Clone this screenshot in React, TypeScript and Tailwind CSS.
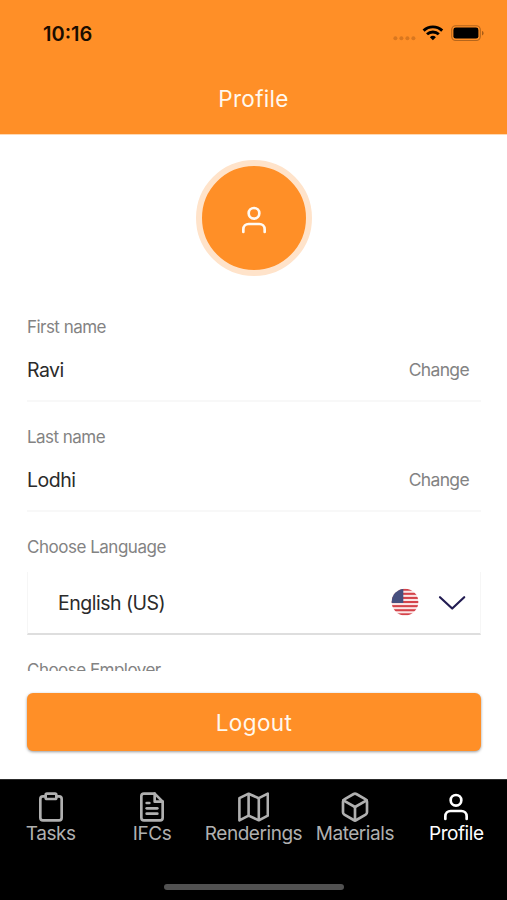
import React, { useState } from 'react';
import { FiBox, FiClipboard, FiFileText, FiUser } from 'react-icons/fi';

interface NameFieldProps {
  label: string;
  value: string;
}

function MapIcon({ size }: { size: number }) {
  return (
    <svg width={size} height={size} viewBox="0 0 32 32" fill="none" stroke="currentColor" strokeWidth="2.6" strokeLinejoin="round">
      <path d="M2.4 7.2l9.2-4.5 10.2 4.5 9-4.5v21.9l-9 4.7-10.2-4.7-9.2 4.7z" />
      <path d="M11.6 2.7v21.9M21.8 7.2v22.1" />
    </svg>
  );
}

const tabs = [
  { id: 'tasks', label: 'Tasks', icon: FiClipboard },
  { id: 'ifcs', label: 'IFCs', icon: FiFileText },
  { id: 'renderings', label: 'Renderings', icon: MapIcon },
  { id: 'materials', label: 'Materials', icon: FiBox },
  { id: 'profile', label: 'Profile', icon: FiUser },
];

function StatusBar() {
  return (
    <div className="flex h-[66px] items-center justify-between pl-[43px] pr-[23px]">
      <span className="pt-px text-[20px] leading-6 font-semibold tracking-[0px] text-[#1a0d00]">10:16</span>
      <svg width="92" height="20" viewBox="0 0 92 20" fill="none">
        <g fill="#d9771f">
          <circle cx="3.4" cy="15.2" r="2" />
          <circle cx="9.4" cy="15.2" r="2" />
          <circle cx="15.4" cy="15.2" r="2" />
          <circle cx="21.4" cy="15.2" r="2" />
        </g>
        <g stroke="#000" strokeWidth="2.9">
          <path d="M31.6 7.6a13.4 13.4 0 0 1 18.6 0" />
          <path d="M35 11.3a8.6 8.6 0 0 1 11.8 0" />
        </g>
        <path d="M40.9 17.2l-3-3a4.4 4.4 0 0 1 6 0z" fill="#000" />
        <rect x="59.7" y="2.7" width="28.6" height="14.8" rx="4" stroke="#b5651b" strokeWidth="1.1" />
        <rect x="61.4" y="4.6" width="25" height="11" rx="2.4" fill="#000" />
        <path d="M90 8v4.4c1-.3 1.6-1.2 1.6-2.2S91 8.3 90 8z" fill="#a85c17" />
      </svg>
    </div>
  );
}

function NameField({ label, value }: NameFieldProps) {
  return (
    <div className="mb-[25px] border-b-2 border-[#f8f8f8]">
      <div className="text-[17px] leading-5 tracking-[-0.54px] text-[#838383]">{label}</div>
      <div className="flex h-[63px] items-center justify-between pt-[5px] pr-3">
        <span className="text-[19.5px] tracking-[-0.5px] text-[#2b2b2b]">{value}</span>
        <button className="-mt-[2px] text-[17.5px] tracking-[-0.65px] text-[#838383]">Change</button>
      </div>
    </div>
  );
}

function UsFlag() {
  return (
    <svg className="-mt-px" width="28" height="28" viewBox="0 0 28 28">
      <defs>
        <clipPath id="flag-circle">
          <circle cx="14" cy="14" r="13.3" />
        </clipPath>
      </defs>
      <g clipPath="url(#flag-circle)">
        <rect width="28" height="28" fill="#fbe6e6" />
        {[0, 1, 2, 3, 4, 5, 6].map(i => (
          <rect key={i} y={0.7 + i * 4.1} width="28" height="2.05" fill="#d4434a" />
        ))}
        <rect width="12.3" height="15" fill="#47507f" />
      </g>
    </svg>
  );
}

export default function App() {
  const [activeTab, setActiveTab] = useState('profile');

  return (
    <div className="flex h-[900px] w-[507px] flex-col overflow-hidden bg-white font-['Inter','Liberation_Sans',sans-serif]">
      <header className="box-content h-[134px] shrink-0 border-b border-[#ffd9b3] bg-[#ff8f27]">
        <StatusBar />
        <h1 className="pt-[17px] text-center text-[22.5px] leading-8 tracking-[0.3px] text-[#fff8ee]">Profile</h1>
      </header>

      <main className="h-[536px] shrink-0 overflow-hidden pr-[26px] pl-[27px]">
        <div className="mx-auto mt-[25px] flex h-[116px] w-[116px] items-center justify-center rounded-full border-6 border-[#ffe3ca] bg-[#ff8f27]">
          <FiUser className="mt-[3px] text-[#fffaf3]" size={32} />
        </div>
        <div className="mt-[41px]">
          <NameField label="First name" value="Ravi" />
          <NameField label="Last name" value="Lodhi" />
        </div>
        <div className="text-[17px] leading-5 tracking-[-0.48px] text-[#838383]">Choose Language</div>
        <button className="mt-[15px] flex h-[63px] w-full items-center border-x border-b-2 border-x-[#f6f6f6] border-b-[#dedede] pr-[14px] pl-[30px]">
          <span className="flex-1 pt-[2px] text-left text-[19.5px] tracking-[-0.5px] text-[#2b2b2b]">English (US)</span>
          <UsFlag />
          <svg className="ml-[19px]" width="28" height="16" viewBox="0 0 28 16" fill="none">
            <path d="M2 2.2l12.2 11.3L26.2 2.2" stroke="#221c52" strokeWidth="2.2" strokeLinecap="round" strokeLinejoin="round" />
          </svg>
        </button>
        <div className="mt-[25px] text-[17px] leading-5 tracking-[-0.52px] text-[#838383]">Choose Employer</div>
      </main>

      <div className="h-[108px] shrink-0 pt-[22px] pr-[26px] pl-[27px]">
        <button className="h-[58px] w-full rounded-[6px] bg-[#ff8f27] pt-[2px] text-[22.5px] tracking-[0.4px] text-[#fff8ee] shadow-[0_1px_3px_rgba(0,0,0,0.4)]">
          Logout
        </button>
      </div>

      <footer className="flex flex-1 flex-col items-center border-t border-[#2c2c2c] bg-black">
        <nav className="flex w-full pt-[11px]">
          {tabs.map(tab => (
            <button
              key={tab.id}
              className={`flex w-1/5 flex-col items-center ${activeTab === tab.id ? 'text-white' : 'text-[#b0b0b0]'}`}
              onClick={() => setActiveTab(tab.id)}
            >
              <tab.icon size={32} />
              <span className="text-[19px] leading-[22px] tracking-[-0.45px] whitespace-nowrap">{tab.label}</span>
            </button>
          ))}
        </nav>
        <div className="mt-[39px] h-[6px] w-[180px] rounded-full bg-[#515151]" />
      </footer>
    </div>
  );
}
